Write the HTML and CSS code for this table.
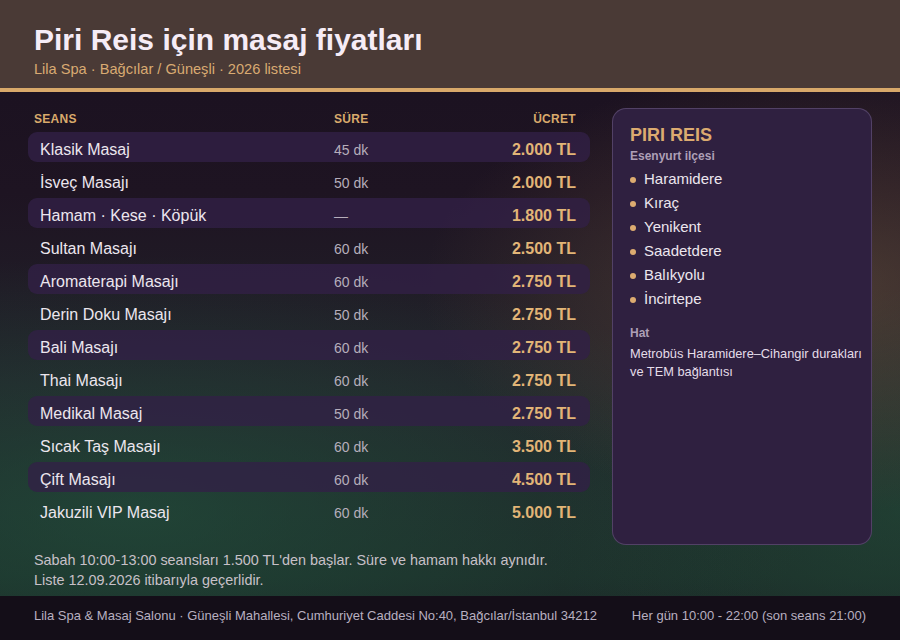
FILE: index.html
```html
<!DOCTYPE html>
<html lang="tr">
<head>
<meta charset="utf-8">
<title>Piri Reis için masaj fiyatları</title>
<link rel="stylesheet" href="styles.css">
</head>
<body>
<header class="top">
  <h1 class="title">Piri Reis için masaj fiyatları</h1>
  <p class="sub">Lila Spa · Bağcılar / Güneşli · 2026 listesi</p>
</header>
<main class="main">
  <section class="prices">
    <div class="thead">
      <span>SEANS</span><span>SÜRE</span><span class="r">ÜCRET</span>
    </div>
    <div class="row alt"><span class="name">Klasik Masaj</span><span class="dur">45 dk</span><span class="price">2.000 TL</span></div>
    <div class="row"><span class="name">İsveç Masajı</span><span class="dur">50 dk</span><span class="price">2.000 TL</span></div>
    <div class="row alt"><span class="name">Hamam · Kese · Köpük</span><span class="dur">—</span><span class="price">1.800 TL</span></div>
    <div class="row"><span class="name">Sultan Masajı</span><span class="dur">60 dk</span><span class="price">2.500 TL</span></div>
    <div class="row alt"><span class="name">Aromaterapi Masajı</span><span class="dur">60 dk</span><span class="price">2.750 TL</span></div>
    <div class="row"><span class="name">Derin Doku Masajı</span><span class="dur">50 dk</span><span class="price">2.750 TL</span></div>
    <div class="row alt"><span class="name">Bali Masajı</span><span class="dur">60 dk</span><span class="price">2.750 TL</span></div>
    <div class="row"><span class="name">Thai Masajı</span><span class="dur">60 dk</span><span class="price">2.750 TL</span></div>
    <div class="row alt"><span class="name">Medikal Masaj</span><span class="dur">50 dk</span><span class="price">2.750 TL</span></div>
    <div class="row"><span class="name">Sıcak Taş Masajı</span><span class="dur">60 dk</span><span class="price">3.500 TL</span></div>
    <div class="row alt"><span class="name">Çift Masajı</span><span class="dur">60 dk</span><span class="price">4.500 TL</span></div>
    <div class="row"><span class="name">Jakuzili VIP Masaj</span><span class="dur">60 dk</span><span class="price">5.000 TL</span></div>
    <p class="notes">Sabah 10:00-13:00 seansları 1.500 TL'den başlar. Süre ve hamam hakkı aynıdır.<br>Liste 12.09.2026 itibarıyla geçerlidir.</p>
  </section>
  <aside class="card">
    <h2 class="card-title">PIRI REIS</h2>
    <p class="label">Esenyurt ilçesi</p>
    <ul class="list">
      <li>Haramidere</li>
      <li>Kıraç</li>
      <li>Yenikent</li>
      <li>Saadetdere</li>
      <li>Balıkyolu</li>
      <li>İncirtepe</li>
    </ul>
    <p class="label hat">Hat</p>
    <p class="desc">Metrobüs Haramidere–Cihangir durakları ve TEM bağlantısı</p>
  </aside>
</main>
<footer class="foot">
  <span>Lila Spa &amp; Masaj Salonu · Güneşli Mahallesi, Cumhuriyet Caddesi No:40, Bağcılar/İstanbul 34212</span>
  <span>Her gün 10:00 - 22:00 (son seans 21:00)</span>
</footer>
</body>
</html>
```
FILE: styles.css
```css
* { box-sizing: border-box; }
html, body { margin: 0; padding: 0; }
body {
  width: 900px;
  height: 640px;
  overflow: hidden;
  display: flex;
  flex-direction: column;
  font-family: "Liberation Sans", Arial, sans-serif;
  color: #ece6ee;
  background:
    radial-gradient(ellipse 45% 35% at 92% 45%, rgba(125, 95, 65, 0.45), transparent 100%),
    radial-gradient(ellipse 75% 40% at 15% 80%, rgba(35, 90, 65, 0.55), transparent 100%),
    radial-gradient(ellipse 40% 35% at 100% 80%, rgba(35, 85, 60, 0.5), transparent 100%),
    linear-gradient(180deg, #1a1020 0%, #1e1422 30%, #22222a 60%, #1c2a28 90%, #1a2224 100%);
}
.top {
  height: 92px;
  flex: none;
  background: #4a3a36;
  border-bottom: 4px solid #d8a86a;
  padding: 23px 34px 0;
}
.title {
  margin: 0;
  font-size: 30px;
  line-height: 34px;
  font-weight: bold;
  color: #f6ecf6;
}
.sub {
  margin: 3px 0 0;
  font-size: 14.6px;
  line-height: 18px;
  color: #d9aa72;
}
.main {
  flex: 1;
  display: flex;
  gap: 22px;
  padding: 16px 28px 0;
}
.prices {
  flex: 1;
  display: flex;
  flex-direction: column;
}
.thead {
  display: grid;
  grid-template-columns: 300px 1fr auto;
  padding: 1px 14px 0 6px;
  height: 24px;
  font-size: 12px;
  line-height: 20px;
  font-weight: bold;
  color: #d9aa6c;
  letter-spacing: 0.3px;
}
.r { text-align: right; }
.row {
  display: grid;
  grid-template-columns: 294px 1fr auto;
  align-items: center;
  height: 30px;
  margin-bottom: 3px;
  padding: 6px 14px 0 12px;
  border-radius: 9px;
}
.row.alt { background: rgba(50, 32, 70, 0.78); }
.name { font-size: 16px; color: #ece6ee; }
.dur { font-size: 14px; color: #b6aebb; }
.price { font-size: 16px; font-weight: bold; color: #e2b577; text-align: right; }
.notes {
  margin: auto 0 0;
  padding-bottom: 6px;
  padding-left: 6px;
  font-size: 14.4px;
  line-height: 20px;
  color: #c8c0c8;
}
.card {
  flex: none;
  width: 260px;
  height: 437px;
  background: #2f2040;
  border: 1px solid rgba(150, 130, 175, 0.35);
  border-radius: 14px;
  padding: 16px 2px 16px 17px;
}
.card-title {
  margin: 0;
  font-size: 18px;
  line-height: 20px;
  font-weight: bold;
  color: #dcab70;
}
.label {
  margin: 2px 0 0;
  font-size: 12px;
  line-height: 18px;
  font-weight: bold;
  color: #ad9fb6;
}
.list {
  list-style: none;
  margin: 2px 0 0;
  padding: 0;
}
.list li {
  display: flex;
  align-items: center;
  gap: 8px;
  font-size: 15px;
  line-height: 24px;
  color: #ece6ee;
}
.list li::before {
  content: "";
  width: 6px;
  height: 6px;
  border-radius: 50%;
  background: #dcab70;
  flex: none;
  margin-top: 2px;
}
.hat { margin-top: 13px; }
.desc {
  margin: 3px 0 0;
  font-size: 12.8px;
  line-height: 18px;
  color: #e4dce8;
}
.foot {
  flex: none;
  height: 44px;
  background: #140e18;
  display: flex;
  justify-content: space-between;
  align-items: center;
  padding: 0 34px 5px;
  font-size: 13px;
  color: #b8b0c0;
}
```
